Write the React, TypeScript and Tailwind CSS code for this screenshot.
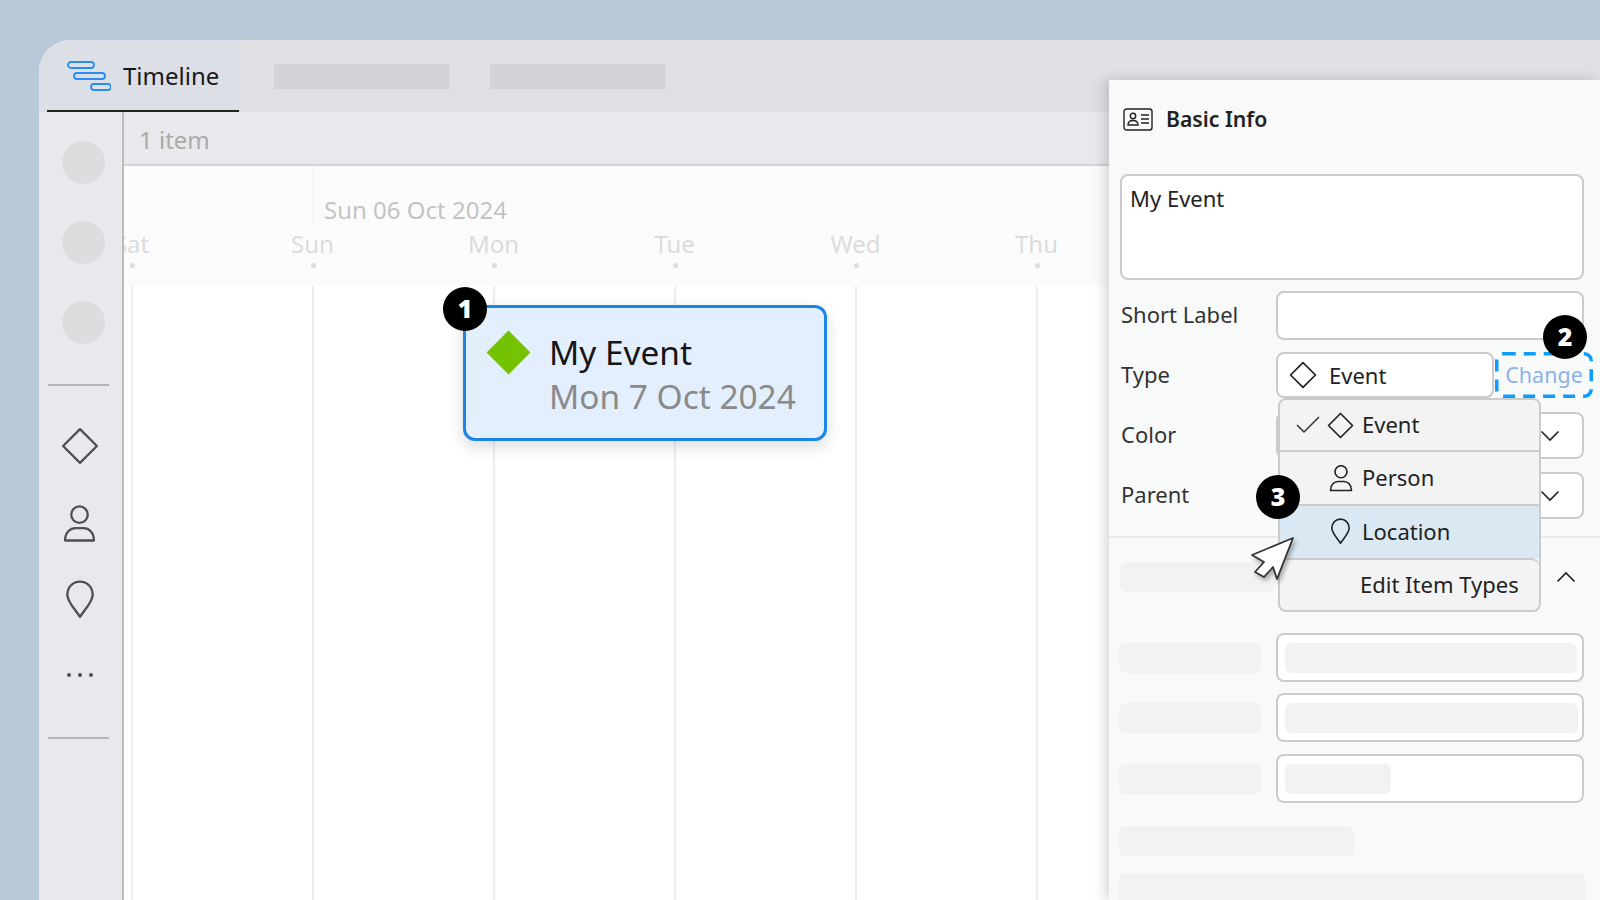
import type { ReactNode } from "react";

const FONT = "font-['Noto_Sans','Open_Sans',sans-serif]";

const days = ["Sat", "Sun", "Mon", "Tue", "Wed", "Thu"];

function DiamondIcon({ className }: { className: string }) {
  return (
    <svg viewBox="0 0 36 36" fill="none" stroke="currentColor" strokeWidth="2.2" strokeLinejoin="round" className={className}>
      <path d="M18 2 L34 18 L18 34 L2 18 Z" />
    </svg>
  );
}

function PersonIcon({ className }: { className: string }) {
  return (
    <svg viewBox="0 0 32 36" fill="none" stroke="currentColor" strokeWidth="2.2" strokeLinejoin="round" className={className}>
      <circle cx="16" cy="9" r="8" />
      <path d="M2 34 C2 26 7 22 12 22 H20 C25 22 30 26 30 34 Z" />
    </svg>
  );
}

function PinIcon({ className }: { className: string }) {
  return (
    <svg viewBox="0 0 28 36" fill="none" stroke="currentColor" strokeWidth="2.2" strokeLinejoin="round" className={className}>
      <path d="M14 35 C9 27 2 21 2 14 C2 6.5 7.5 1.500 14 1.500 C20.500 1.500 26 6.500 26 14 C26 21 19 27 14 35 Z" />
    </svg>
  );
}

function Chevron({ up }: { up?: boolean }) {
  return (
    <svg viewBox="0 0 20 12" fill="none" stroke="currentColor" strokeWidth="1.600" className="h-3 w-5 text-[#222]">
      <path d={up ? "M1.500 10.500 L10 2 L18.500 10.500" : "M1.500 1.500 L10 10 L18.500 1.500"} />
    </svg>
  );
}

function Badge({ n, className }: { n: number; className: string }) {
  return (
    <div className={`absolute z-30 flex h-11 w-11 items-center justify-center rounded-full bg-black text-[25px] font-black text-white ${className}`}>
      {n}
    </div>
  );
}

function Skeleton({ className }: { className: string }) {
  return <div className={`rounded-md bg-[#f1f2f3] ${className}`} />;
}

function FormRow({ label, children, className }: { label: string; children: ReactNode; className: string }) {
  return (
    <div className={`flex items-center pl-[12px] ${className}`}>
      <span className="w-[155px] pb-[3px] text-[22px] leading-none text-[#333]">{label}</span>
      {children}
    </div>
  );
}

function SkeletonRow({ inner, className = "" }: { inner: string; className?: string }) {
  return (
    <div className={`flex items-center ${className}`}>
      <Skeleton className="h-[30px] w-[142px]" />
      <div className="ml-[15px] flex h-[49px] w-[308px] items-center rounded-lg border-2 border-[#cbcbcb] bg-white pl-[7px]">
        <Skeleton className={`h-[30px] ${inner}`} />
      </div>
    </div>
  );
}

function MenuItem({ children, className }: { children: ReactNode; className: string }) {
  return <div className={`flex items-center text-[22px] leading-none text-[#222] ${className}`}>{children}</div>;
}

export default function App() {
  return (
    <div className={`relative h-[900px] w-[1600px] overflow-hidden bg-[#b8cad8] pl-[39px] pt-10 ${FONT}`}>
      <div className="flex h-[860px] flex-col overflow-hidden rounded-tl-[32px] bg-white">
        {/* tab bar */}
        <div className="flex h-[72px] shrink-0 items-center bg-[#dfe0e4]">
          <div className="flex h-full w-[202px] items-center bg-[#dcdfe6] pl-[28px]">
            <div className="relative flex h-full w-full items-center">
              <svg viewBox="0 0 44 30" fill="none" stroke="#2a8df5" strokeWidth="1.800" className="h-[30px] w-[44px]">
                <rect x="1" y="1" width="26" height="6" rx="3" />
                <rect x="7" y="12" width="31" height="6" rx="3" />
                <rect x="24" y="23" width="20" height="6" rx="3" />
              </svg>
              <span className="ml-[12px] text-[24px] leading-none text-[#1a1a1a]">Timeline</span>
              <div className="absolute bottom-0 left-[-20px] h-[2px] w-[192px] bg-[#222]" />
            </div>
          </div>
          <div className="ml-[33px] h-[25px] w-[175px] bg-[#d2d3d7]" />
          <div className="ml-[41px] h-[25px] w-[175px] bg-[#d2d3d7]" />
        </div>

        <div className="flex min-h-0 flex-1">
          {/* left tool rail */}
          <div className="relative z-[1] flex w-[85px] shrink-0 flex-col items-center border-r-2 border-[#bcbcbc] bg-[#e8e9ec] pt-[29px]">
            <div className="ml-[5px] h-[43px] w-[43px] rounded-full bg-[#dcddde]" />
            <div className="ml-[5px] mt-[37px] h-[43px] w-[43px] rounded-full bg-[#dcddde]" />
            <div className="ml-[5px] mt-[37px] h-[43px] w-[43px] rounded-full bg-[#dcddde]" />
            <div className="ml-[-4px] mt-[40px] h-[2px] w-[61px] bg-[#b5b5b5]" />
            <DiamondIcon className="ml-[-2px] mt-[41px] h-[38px] w-[38px] text-[#505050]" />
            <PersonIcon className="ml-[-2px] mt-[40px] h-[38px] w-[33px] text-[#505050]" />
            <PinIcon className="ml-[-2px] mt-[37px] h-[38px] w-[30px] text-[#505050]" />
            <div className="ml-[-2px] mt-[55px] flex gap-[7px]">
              <div className="h-1 w-1 rounded-full bg-[#505050]" />
              <div className="h-1 w-1 rounded-full bg-[#505050]" />
              <div className="h-1 w-1 rounded-full bg-[#505050]" />
            </div>
            <div className="ml-[-4px] mt-[60px] h-[2px] w-[61px] bg-[#b5b5b5]" />
          </div>

          <div className="flex min-w-0 flex-1 flex-col">
            <div className="flex h-[54px] shrink-0 items-center border-b-2 border-[#d2d3d6] bg-[#e8e9ec] pl-[15px] pt-[4px] text-[24px] leading-none text-[#aaaaaa]">
              1 item
            </div>

            {/* date header */}
            <div className="relative h-[120px] shrink-0 bg-[#fbfbfb]">
              <div className="absolute left-[189px] top-0 h-[61px] w-px bg-[#eeeeee]" />
              <div className="pl-[200px] pt-[29px] text-[24px] leading-[30px] text-[#c4c4c4]">Sun 06 Oct 2024</div>
              <div className="mt-[4px] flex">
                {days.map((d, i) => (
                  <div key={d} className={`flex w-[181px] shrink-0 flex-col items-center text-[24px] leading-[30px] text-[#dcdcdc] ${i === 0 ? "ml-[-82px]" : ""}`}>
                    <span className="-translate-x-px">{d}</span>
                    <div className="mt-[4px] h-[5px] w-[5px] rounded-full bg-[#dcdcdc]" />
                  </div>
                ))}
              </div>
            </div>

            {/* grid lines */}
            <div className="flex flex-1 pl-[7px]">
              {days.map((d) => (
                <div key={d} className="h-full w-[181px] shrink-0 border-l-2 border-[#eeeeee]" />
              ))}
            </div>
          </div>
        </div>
      </div>

      {/* selected event on the canvas */}
      <div className="absolute left-[463px] top-[305px] z-10 flex h-[136px] w-[364px] rounded-[12px] border-[3px] border-[#1a86e6] bg-[#e3effd] pl-[19px] pt-[22px] shadow-[0_6px_16px_rgba(0,0,0,0.14)]">
        <div className="mt-[2px] h-[31px] w-[31px] translate-x-[8px] translate-y-[5px] rotate-45 bg-[#75c200]" />
        <div className="ml-[33px]">
          <div className="text-[33.4px] leading-[44px] text-[#151515]">My Event</div>
          <div className="text-[33.4px] leading-[44px] text-[#8a8a8a]">Mon 7 Oct 2024</div>
        </div>
      </div>
      <Badge n={1} className="left-[443px] top-[287px]" />

      {/* details panel */}
      <div className="absolute bottom-0 left-[1109px] right-0 top-[80px] z-10 bg-[#f8faf9] shadow-[-4px_0_12px_rgba(0,0,0,0.16)]">
        <div className="flex h-[78px] items-center pl-[14px]">
          <svg viewBox="0 0 30 23" fill="none" stroke="#222" strokeWidth="1.400" className="h-[23px] w-[30px]">
            <rect x="1" y="1" width="28" height="21" rx="2.500" />
            <circle cx="10" cy="8" r="2.700" />
            <path d="M5 17 C5 14 7 12.500 10 12.500 C13 12.500 15 14 15 17 Z" />
            <path d="M18 7 H26 M18 11 H26 M18 15 H26" />
          </svg>
          <span className="ml-[13px] text-[21.2px] font-semibold leading-none text-[#222]">Basic Info</span>
        </div>
        <div className="ml-[11px] mt-[16px] h-[106px] w-[464px] rounded-lg border-2 border-[#cbcbcb] bg-white pl-[8px] pt-[7px] text-[22px] leading-[30px] text-[#222]">
          My Event
        </div>
        <FormRow label="Short Label" className="mt-[11px]">
          <div className="h-[49px] w-[308px] rounded-lg border-2 border-[#cbcbcb] bg-white" />
        </FormRow>
        <FormRow label="Type" className="mt-[12px]">
          <div className="flex h-[46px] w-[218px] items-center rounded-lg border-2 border-[#cbcbcb] bg-white pl-[11px] text-[22px] text-[#222]">
            <DiamondIcon className="h-[28px] w-[28px]" />
            <span className="ml-[12px] leading-none">Event</span>
          </div>
          <div className="relative ml-px flex h-[46px] w-[98px] items-center justify-center text-[21.5px] leading-none text-[#8fb2e6]">
            <svg viewBox="0 0 98 46" fill="none" stroke="#0f9bfa" strokeWidth="3.500" strokeDasharray="12 8" className="absolute inset-0 h-full w-full">
              <rect x="1.750" y="1.750" width="94.500" height="42.500" rx="7" />
            </svg>
            Change
          </div>
        </FormRow>
        <FormRow label="Color" className="mt-[14px]">
          <div className="flex h-[47px] w-[308px] items-center justify-end rounded-lg border-2 border-[#cbcbcb] bg-white pr-[22px]">
            <Chevron />
          </div>
        </FormRow>
        <FormRow label="Parent" className="mt-[13px]">
          <div className="flex h-[47px] w-[308px] items-center justify-end rounded-lg border-2 border-[#cbcbcb] bg-white pr-[22px]">
            <Chevron />
          </div>
        </FormRow>
        <div className="mt-[17px] h-[2px] bg-[#e8e9e9]" />

        <div className="ml-[11px] mt-[24px] flex items-center justify-between pr-[24px]">
          <Skeleton className="h-[30px] w-[155px]" />
          <Chevron up />
        </div>
        <div className="ml-[10px] mt-[41px] flex flex-col gap-[11px]">
          <SkeletonRow inner="w-[292px]" />
          <SkeletonRow inner="w-[293px]" />
          <SkeletonRow inner="w-[106px]" className="mt-px" />
        </div>
        <Skeleton className="ml-[10px] mt-[23px] h-[30px] w-[235px]" />
        <Skeleton className="ml-[10px] mt-[17px] h-[40px] w-[466px]" />
      </div>

      {/* open type menu */}
      <div className="absolute left-[1278px] top-[398px] z-20 flex h-[214px] w-[263px] flex-col overflow-hidden rounded-lg border-2 border-[#cbcbcb] bg-[#f3f3f3]">
        <MenuItem className="h-[52px] shrink-0 border-b-2 border-[#cbcbcb] pl-[16px]">
          <svg viewBox="0 0 24 18" fill="none" stroke="#333" strokeWidth="1.500" className="h-[18px] w-[24px]">
            <path d="M1 9 L8 16 L23 1" />
          </svg>
          <DiamondIcon className="ml-[7px] h-[27px] w-[27px]" />
          <span className="ml-[8px] pb-[2px]">Event</span>
        </MenuItem>
        <MenuItem className="h-[52px] shrink-0 pl-[49px]">
          <PersonIcon className="h-[27px] w-[24px]" />
          <span className="ml-[9px] pb-[2px]">Person</span>
        </MenuItem>
        <MenuItem className="h-[54px] shrink-0 border-t-2 border-[#cbcbcb] bg-[#d9e8f3] pl-[50px] text-[#1d2a36]">
          <PinIcon className="h-[26px] w-[21px] -translate-y-px" />
          <span className="ml-[11px] pb-[2px]">Location</span>
        </MenuItem>
        <MenuItem className="min-h-0 flex-1 rounded-t-lg border-t-2 border-[#cbcbcb] pb-[2px] pl-[80px]">Edit Item Types</MenuItem>
      </div>

      <Badge n={2} className="left-[1543px] top-[315px]" />
      <Badge n={3} className="left-[1256px] top-[475px]" />

      {/* mouse pointer */}
      <svg viewBox="0 0 46 46" fill="#fff" stroke="#333" strokeWidth="1.800" strokeLinejoin="round" className="absolute left-[1250px] top-[536px] z-30 h-[46px] w-[46px] drop-shadow-[2px_3px_2px_rgba(0,0,0,0.3)]">
        <path d="M43 2 L2 19 L14 26 L5 36 L14 41 L23 31 L27 43 Z" />
      </svg>
    </div>
  );
}
